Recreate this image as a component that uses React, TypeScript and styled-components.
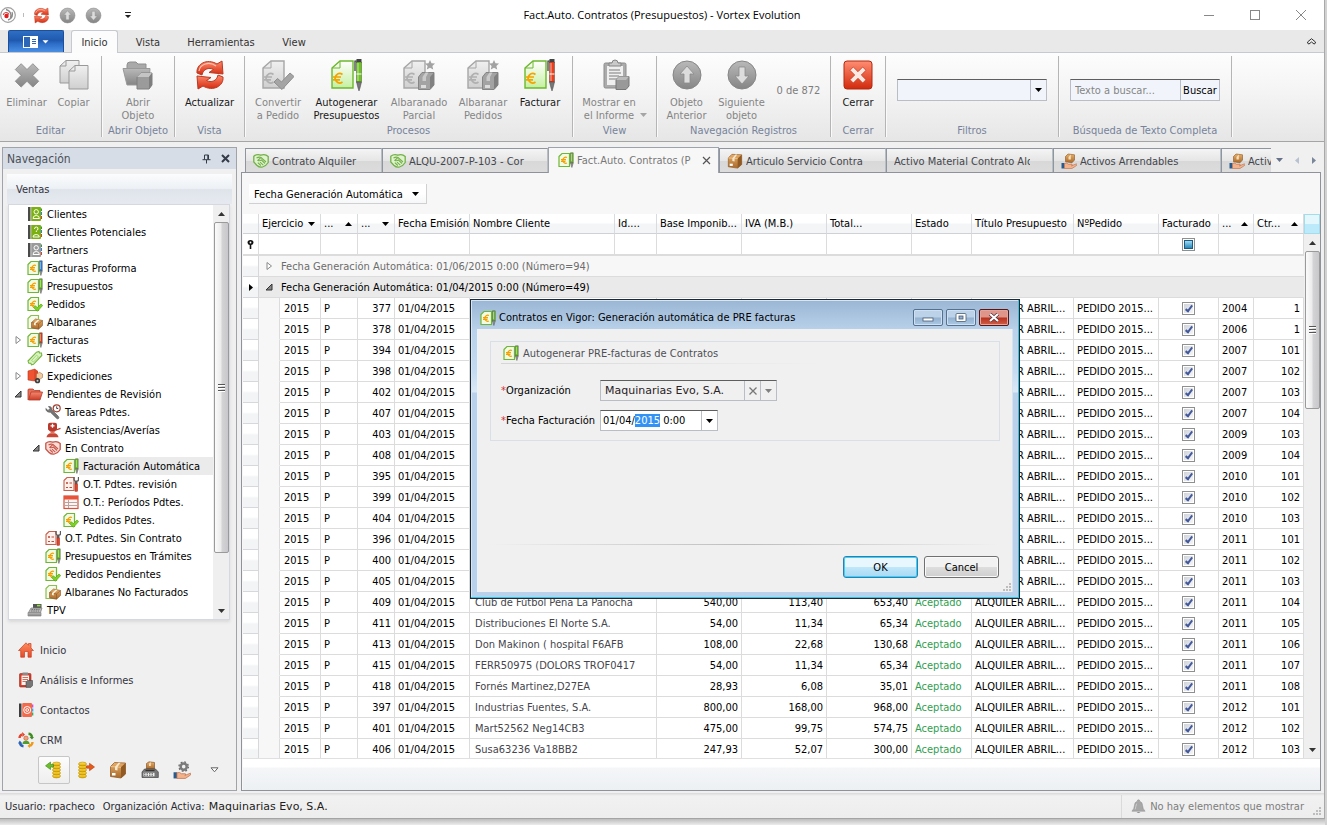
import React, { useEffect, useRef } from 'react';
import styled, { createGlobalStyle, css } from 'styled-components';

const UI = '"DejaVu Sans Condensed", "Noto Sans", sans-serif';
const WIDE = '"DejaVu Sans", "Noto Sans", sans-serif';

const GlobalStyle = createGlobalStyle`
  *, *::before, *::after { box-sizing: border-box; }
  body { margin: 0; background: #dcdcdc; font-family: ${UI}; font-size: 11px; line-height: 13px; color: #000; }
  button, input, select { font: inherit; color: inherit; margin: 0; }
  button { padding: 0; border: 0; background: none; }
  ul { list-style: none; margin: 0; padding: 0; }
  svg { display: block; flex: none; }
`;

/* ---------- icons ---------- */

type IconProps = { size?: number; box?: number; children?: React.ReactNode };
const Icon = ({ size = 16, box = 16, children }: IconProps) => (
  <svg width={size} height={size} viewBox={`0 0 ${box} ${box}`} fill="none" aria-hidden="true">{children}</svg>
);

const HiddenDefs = styled.svg`position: absolute; width: 0; height: 0;`;
const Defs = () => (
  <HiddenDefs aria-hidden="true">
    <defs>
      {([
        ['gGray', '#b9b9b9', '#858585'], ['gPaleGray', '#f0f0f0', '#cfcfcf'], ['gRed', '#ff8a6c', '#d42a10'],
        ['gRedBtn', '#ff8d72', '#d12a0c'], ['gGreenDoc', '#ffffff', '#c5f0a0'], ['gBox', '#e8b06a', '#a9682a'],
        ['gGold', '#ffe45c', '#e0a800'], ['gFolder', '#f58a72', '#c93c28'], ['gHome', '#ff8e5e', '#e5482a'],
      ] as const).map(([id, a, b]) => (
        <linearGradient key={id} id={id} x1="0" y1="0" x2="0" y2="1">
          <stop offset="0" stopColor={a} /><stop offset="1" stopColor={b} />
        </linearGradient>
      ))}
    </defs>
  </HiddenDefs>
);

const RefreshIcon = ({ size = 32 }) => (
  <Icon size={size} box={32}>
    <g fill="url(#gRed)" stroke="#b93a22" strokeWidth="1" strokeLinejoin="round">
      <path d="M3 14 C2 5 13 -1 23 5 L28 2 L29 15 L15 13.500 L19.500 10.500 C15 8 9 10 8 16 Z" />
      <path d="M29 18 C30 27 19 33 9 27 L4 30 L3 17 L17 18.500 L12.500 21.500 C17 24 23 22 24 16 Z" />
    </g>
    <path d="M5 12 C6 5 15 2 22 7" stroke="#ffc4b3" strokeWidth="1.200" />
  </Icon>
);

const RoundArrow = ({ size = 32, down = false }) => (
  <Icon size={size} box={32}>
    <circle cx="16" cy="16" r="14" fill="url(#gGray)" stroke="#868686" />
    <path transform={down ? 'rotate(180 16 16)' : undefined} d="M16 7 L23 15 H19 V24 H13 V15 H9 Z" fill="#dcdcdc" stroke="#8b8b8b" strokeWidth=".8" />
  </Icon>
);

const AppIcon = () => (
  <Icon>
    <circle cx="8" cy="8" r="7.300" fill="#fff" stroke="#a0a0a0" strokeWidth="1.200" />
    <path d="M6 2.500 C10 3.500 12 7 10.500 11 M12 5 C13.500 8 12 12 8 13" stroke="#8a8a8a" strokeWidth="1.300" />
    <path d="M3.300 8 C3.800 5 7.500 4.500 9 7.500" stroke="#e03a3a" strokeWidth="1.200" />
    <circle cx="6.500" cy="9" r="2.200" fill="#e01f1f" />
  </Icon>
);

const CrossIcon = () => (
  <Icon size={32} box={32}>
    <path d="M9.500 3 L16 9.500 L22.500 3 L29 9.500 L22.500 16 L29 22.500 L22.500 29 L16 22.500 L9.500 29 L3 22.500 L9.500 16 L3 9.500 Z" transform="translate(1.600 2) scale(.9)" fill="url(#gGray)" stroke="#8b8b8b" />
  </Icon>
);

const CopyIcon = () => (
  <Icon size={32} box={32}>
    <path d="M2 7 L8 1.500 H21 V24 H2 Z" fill="url(#gPaleGray)" stroke="#999" />
    <path d="M2 7 H8 V1.500" stroke="#999" />
    <path d="M11 12 L17 6.500 H30 V30 H11 Z" fill="url(#gPaleGray)" stroke="#999" />
    <path d="M11 12 H17 V6.500" stroke="#999" />
  </Icon>
);

const FolderBoxIcon = () => (
  <Icon size={32} box={32}>
    <path d="M5 20 L5 6 Q5 3 8 3 H14 L16 5 H24 V14 Z" fill="#a9a9a9" stroke="#8f8f8f" />
    <path d="M1 9.500 H28 L27 26 H5 Z" fill="url(#gGray)" stroke="#999" />
    <path d="M15 18 L19 14 H30 V26 L27 30 H15 Z" fill="#9b9b9b" stroke="#7f7f7f" />
    <path d="M15 18 L19 14 H30 L27 18 Z" fill="#c4c4c4" />
    <path d="M27 18 L30 14 V26 L27 30 Z" fill="#7e7e7e" />
  </Icon>
);

const BigPage = ({ gray = false }) => (
  <g>
    <path d="M1 9 L9 2 H22 V29 H1 Z" fill={gray ? 'url(#gPaleGray)' : 'url(#gGreenDoc)'} stroke={gray ? '#a6a6a6' : '#6cb82c'} strokeWidth="1.400" />
    <path d="M1 9 H9 V2" stroke={gray ? '#a6a6a6' : '#6cb82c'} />
    <path d="M11.500 15.500 A4.600 4.600 0 1 0 11.500 23 M2 18 H10 M2 20.800 H9" stroke={gray ? '#b0b0b0' : '#f5a300'} strokeWidth="1.700" />
  </g>
);

const BigDocCheck = () => (
  <Icon size={32} box={32}><BigPage gray />
    <path d="M12 23 L15.500 19.500 L19.500 23 L28 14 L32 17.500 L20 30.500 Z" fill="#a5a5a5" stroke="#8e8e8e" /></Icon>
);
const BigDocBox = () => (
  <Icon size={32} box={32}><BigPage gray />
    <path d="M15.500 18 L19 13.500 H31 V26 L27 30.500 H15.500 Z" fill="#a3a3a3" stroke="#858585" />
    <path d="M27 18 L31 13.500 V26 L27 30.500 Z" fill="#808080" />
    <path d="M19.500 18 L22.500 13.500 H25.500 L23 18 V22 H19.500 Z" fill="#cacaca" />
    <rect x="18" y="26" width="5" height="3" fill="#dcdcdc" />
    <path d="M27 1 L28.500 4.200 L32 4.600 L29.400 7 L30.200 10.500 L27 8.700 L23.800 10.500 L24.600 7 L22 4.600 L25.500 4.200 Z" fill="#a2a2a2" /></Icon>
);
const BigDocPen = ({ color }: { color: string }) => (
  <Icon size={32} box={32}><BigPage />
    <path d="M24 12 V2 H27" stroke="#333" strokeWidth="1.200" />
    <rect x="25.500" y="0" width="5" height="4" fill="#444" />
    <rect x="25.500" y="3" width="5" height="20" fill={color} stroke="#333" strokeWidth=".4" />
    <rect x="26.500" y="4" width="1" height="18" fill="#fff" opacity=".6" />
    <path d="M25.500 15 H30.500" stroke="#fff" /><path d="M25.500 23 H30.500 L29 29 L28 32 L27 29 Z" fill="#777" stroke="#444" strokeWidth=".5" /></Icon>
);

const ClipboardIcon = () => (
  <Icon size={32} box={32}>
    <rect x="5" y="4" width="22" height="25" rx="1.500" fill="#ababab" stroke="#8c8c8c" />
    <rect x="8" y="7" width="16" height="19" fill="#efefef" />
    <path d="M10 7 V4 H13 A3 3 0 0 1 19 4 H22 V7 Z" fill="#c9c9c9" stroke="#858585" />
    <path d="M10 11 H21 M10 14 H22 M10 17 H20 M10 20 H18" stroke="#a2a2a2" strokeWidth="1.400" />
    <path d="M17 21 L20 17.500 H30 V27 L27 30.500 H17 Z" fill="#999" stroke="#777" />
    <path d="M17 21 L20 17.500 H30 L27 21 Z" fill="#bbb" />
  </Icon>
);

const CloseBigIcon = () => (
  <Icon size={32} box={32}>
    <rect x="2" y="2" width="28" height="28" rx="3" fill="url(#gRedBtn)" stroke="#b3290f" />
    <path d="M11.300 8 L16 12.700 L20.700 8 L24 11.300 L19.300 16 L24 20.700 L20.700 24 L16 19.300 L11.300 24 L8 20.700 L12.700 16 L8 11.300 Z" fill="#ffe9e2" stroke="#c43a20" strokeWidth=".8" />
  </Icon>
);

const BookIcon = ({ color, mark = false }: { color: string; mark?: boolean }) => (
  <Icon>
    <path d="M1 1 H3.500 V15 H1 Z" fill="#4a4a4a" />
    <path d="M4.200 1 H13 Q14 1 14 2 V14 Q14 15 13 15 H4.200 Z" fill={color} />
    <path d="M14.500 2.500 V5" stroke="#2a9d3c" /><path d="M14.500 6 V9" stroke="#2e7fe0" /><path d="M14.500 10 V13" stroke="#e04020" />
    {mark
      ? <path d="M7.500 5 Q7.500 3 9.300 3 Q11.200 3 11 5 Q10.800 6 9.300 7 V8 M6 13 Q6 10.500 9.200 10.500 Q12.300 10.500 12.300 13 Z" stroke="#fff" />
      : <><circle cx="9.200" cy="5.800" r="2.200" stroke="#fff" /><path d="M6 12.500 Q6 9.500 9.200 9.500 Q12.400 9.500 12.400 12.500 Z" stroke="#fff" /></>}
  </Icon>
);

const SmallPage = () => (
  <g>
    <path d="M1 4.500 L4 1.500 H11.500 V14.500 H1 Z" fill="#f0fbe4" stroke="#6fb536" strokeWidth="1.200" />
    <path d="M9 5.500 A3 3 0 1 0 9 11 M3 7.600 H8 M3 9.300 H7.500" stroke="#f5a000" strokeWidth="1.200" />
  </g>
);
const DocPenIcon = ({ color = '#6cc51a' }) => (
  <Icon><SmallPage />
    <path d="M12.500 .8 H15.200 V11 H12.500 Z" fill={color} stroke="#444" strokeWidth=".5" />
    <path d="M13.400 2 V9" stroke="#fff" strokeWidth=".6" opacity=".7" />
    <path d="M12.500 11 H15.200 L13.900 15.500 Z" fill="#999" stroke="#555" strokeWidth=".5" /></Icon>
);
const DocCheckIcon = () => (
  <Icon><SmallPage /><path d="M6.500 11.500 L8.500 9.800 L10.300 11.600 L14 8 L15.700 9.500 L10.400 15.300 Z" fill="#7ed321" stroke="#4d9c12" strokeWidth=".6" /></Icon>
);
const DocBoxIcon = () => (
  <Icon>
    <path d="M1 4.500 L4 1.500 H11.500 V14.500 H1 Z" fill="#f4fbea" stroke="#8cbf4d" strokeWidth="1.200" />
    <path d="M4.500 8.500 L8.500 5 L15.500 6.500 V11.500 L11.500 15.300 L4.500 13.800 Z" fill="url(#gBox)" stroke="#8a5420" strokeWidth=".6" />
    <path d="M11.500 10 L15.500 6.500 M4.500 8.500 L11.500 10 V15" stroke="#8d5523" strokeWidth=".6" /><path d="M7 9 L11 5.600 L12.500 6 L8.700 9.400 V11.500 L7 11 Z" fill="#fff2dc" />
  </Icon>
);
const TicketIcon = () => (
  <Icon><path d="M1 11 L9.500 2.200 L12 1.500 L12.500 3 L14.500 3 L14.800 5.500 L6.500 14.300 L4.500 14.800 L3.800 13.200 L1.800 13.200 Z" fill="#d9f3c0" stroke="#74b43c" strokeWidth="1.100" /><path d="M4.500 10.500 L9.500 5.200 L11.500 6.800 L6.500 12 Z" stroke="#a5d67c" /></Icon>
);
const ExpeditionIcon = () => (
  <Icon><path d="M1 3 L8 1 V13 L1 12 Z" fill="#ef5330" stroke="#b83218" strokeWidth=".6" /><path d="M8 1 L11 3 V12 L8 13 Z" fill="#d6492c" />
    <path d="M9.500 6 L12.500 4.300 L15.500 6 V9.500 L12.500 11.500 L9.500 9.700 Z" fill="#f0cba2" stroke="#a8703a" strokeWidth=".6" />
    <circle cx="10.500" cy="12.700" r="2.600" fill="#3d3d3d" /><circle cx="10.500" cy="12.700" r="1" fill="#ccc" /></Icon>
);
const FolderIcon = () => (
  <Icon><path d="M1 14 V4 Q1 3 2 3 H6 L7.500 4.500 H13 V7" fill="#e5705a" stroke="#b83a26" strokeWidth=".8" /><path d="M1.500 14 L4 6 H15.500 L13 14 Z" fill="url(#gFolder)" stroke="#b83a26" strokeWidth=".8" /></Icon>
);
const TaskIcon = () => (
  <Icon><path d="M0.800 4.500 L3 6.500 L5 4.500 L3.500 2.500 Q7 2.200 7 6 L13 12 Q14.500 13.500 13.500 14.500 Q12.500 15.300 11.500 14.200 L5.500 8.300 Q1 8.500 .8 4.500 Z" fill="#777" stroke="#4d4d4d" strokeWidth=".6" />
    <circle cx="11.700" cy="4.300" r="3.500" fill="#fff" stroke="#a54030" strokeWidth="1.200" /><path d="M11.700 2.300 V4.500 H13.200" stroke="#333" strokeWidth=".9" /></Icon>
);
const AssistIcon = () => (
  <Icon><path d="M3 2.500 Q3 .8 5 .8 H10 Q12 .8 12 2.500 V7.500 Q10 10 7.500 10 Q5 10 3 7.500 Z" fill="#b8392b" /><path d="M7.500 1.800 V5.800 M5.500 3.800 H9.500" stroke="#fff" strokeWidth="1.300" />
    <path d="M11 8 L15.500 6.300" stroke="#c03a2a" strokeWidth="1.300" /><path d="M1.500 15.300 Q2 11.500 6 11.200 H9 Q13 11.500 13.500 15.300 Z" fill="#c84636" /><path d="M5.500 9.500 H9.500 V11.500 H5.500 Z" fill="#e1735f" /></Icon>
);
const HandshakeIcon = ({ color, pale }: { color: string; pale: string }) => (
  <Icon><path d="M.8 3.200 Q4 .8 7.800 2.200 Q12 .5 15.200 3.400 V9.500 Q13 13 9.500 14 Q6.500 14.800 3.800 12.200 L.8 9 Z" fill={pale} stroke={color} strokeWidth="1.300" />
    <path d="M3.500 5 Q6 3.500 8 4.500 L13 9 M7.500 5 L4.800 7.300 Q6.500 8.300 8.500 7 L12 10.500 M7 9.200 L10.300 12.200 M4.800 9.600 L7.800 12.500" stroke={color} strokeWidth="1.100" /></Icon>
);
const WorkOrderIcon = () => (
  <Icon><path d="M1 4.500 L4 1.500 H11 V14.500 H1 Z" fill="#fdf1ee" stroke="#c9604c" strokeWidth="1.100" />
    <path d="M3 7 H5 M4 6 V8 M6.500 7 H9 M3 11.500 H5 M6.500 11.500 H9" stroke="#c04a35" strokeWidth="1.100" />
    <path d="M11 1 V3.500 Q11 5 12.500 5.200 V8 M15.500 1 V3.500 Q15.500 5 13.800 5.200 V8" stroke="#5a5a5a" strokeWidth="1.300" /><rect x="12" y="8" width="2.600" height="7.300" fill="#e2452c" stroke="#a32a16" strokeWidth=".5" /></Icon>
);
const TableIcon = () => (
  <Icon><rect x="1" y="2" width="14" height="12.500" fill="#fdf4f1" stroke="#d6543c" strokeWidth="1.200" /><rect x="1" y="2" width="14" height="3.500" fill="#e8533a" /><path d="M5.500 6 V14 M1 8.500 H15 M1 11.500 H15" stroke="#b9a5a0" /></Icon>
);
const PosIcon = () => (
  <Icon><path d="M6 2 H14.500 V6 H6 Z" fill="#555" /><rect x="10" y="2.800" width="3.500" height="1.600" fill="#8ee03a" /><path d="M4 6 H15 L13.500 10.500 H1.500 Z" fill="#b9b9b9" stroke="#7b7b7b" strokeWidth=".7" /><path d="M4.500 7.500 H12.500 M4 9 H12" stroke="#777" strokeDasharray="1.500 .8" /><path d="M1 10.500 H14 V14 H1 Z" fill="url(#gGray)" stroke="#888" strokeWidth=".7" /></Icon>
);
const HomeIcon = () => (
  <Icon><path d="M.5 8.500 L8 .8 L10.500 3.300 V1.500 H13 V6 L15.500 8.500 H13.300 V15.200 H10 V9.500 H6.500 V15.200 H2.700 V8.500 Z" fill="url(#gHome)" stroke="#c93f20" strokeWidth=".7" /></Icon>
);
const ReportIcon = () => (
  <Icon><rect x="1.500" y="1.500" width="11.500" height="13.500" rx="1" fill="#d2402c" stroke="#9c2a1a" strokeWidth=".6" /><rect x="3.500" y="3.500" width="7.500" height="9.500" fill="#fff4f0" /><rect x="4.500" y=".5" width="5.500" height="2.500" fill="#8a8a8a" /><path d="M4.500 5.500 H10 M4.500 7.500 H10 M4.500 9.500 H8" stroke="#d0705f" /><path d="M8 10 L9.500 8.500 H14.500 V13.500 L13 15.300 H8 Z" fill="#777" stroke="#444" strokeWidth=".6" /></Icon>
);
const ContactsIcon = () => (
  <Icon><path d="M1 1.500 H3.500 V15 H1 Z" fill="#3d3d3d" /><rect x="4.200" y="1" width="9.800" height="14" rx="1" fill="#f26a4c" /><circle cx="9.200" cy="8" r="3.500" stroke="#fff" /><circle cx="9.200" cy="8" r="1.400" stroke="#fff" /><path d="M14.700 2.500 V5.500" stroke="#d03ad0" strokeWidth="1.200" /><path d="M14.700 6.500 V9.500" stroke="#2e9de0" strokeWidth="1.200" /><path d="M14.700 10.500 V13.500" stroke="#2ea04a" strokeWidth="1.200" /></Icon>
);
const CrmIcon = () => (
  <Icon><g strokeWidth="2.400"><path d="M1.500 6 Q1.800 3 4 2.300" stroke="#e2452c" /><path d="M10.500 1.800 Q13.500 2 14 5" stroke="#3f8c22" /><path d="M14.500 10 Q14.300 13 12 13.800" stroke="#f09a18" /><path d="M5.500 14.200 Q2.500 14 2 11" stroke="#2a62b8" /></g>
    <path d="M4 0 L7 2.500 L4.500 5 Z" fill="#e2452c" /><path d="M11.500 5 H16 L14 7.500 Z" fill="#3f8c22" /><path d="M12 11.500 V16 L9.500 14 Z" fill="#f09a18" /><path d="M0 11.500 L1.800 8.500 L4.300 11.500 Z" fill="#2a62b8" />
    <circle cx="8" cy="6.200" r="2.200" fill="#f0a07a" stroke="#b34a30" strokeWidth=".5" /><path d="M4.500 12 Q4.500 8.800 8 8.800 Q11.500 8.800 11.500 12 Z" fill="#4f9e30" /></Icon>
);
const CoinsIcon = ({ out = false }) => (
  <Icon size={18} box={18}>
    <g transform={out ? 'translate(1 0)' : 'translate(7 0)'}>
      {[15, 12, 9, 6, 3].map((y) => <ellipse key={y} cx="4.500" cy={y} rx="4" ry="1.900" fill="url(#gGold)" stroke="#b98a00" strokeWidth=".6" />)}
    </g>
    {out
      ? <path d="M9.500 4.800 H12.500 V2.300 L17.500 6 L12.500 9.700 V7.200 H9.500 Z" fill="#e85a1a" stroke="#b53c0c" strokeWidth=".6" />
      : <path d="M8.500 3.500 H5.500 V1 L.5 4.800 L5.500 8.500 V6 H8.500 Z" fill="#6cbf2a" stroke="#3c8412" strokeWidth=".6" />}
  </Icon>
);
const BoxIcon = ({ size = 18 }) => (
  <Icon size={size} box={18}><path d="M1.500 5.500 L5.500 1.500 L16.500 2 V13 L12 17 L1.500 15.500 Z" fill="url(#gBox)" stroke="#8b5520" strokeWidth=".7" /><path d="M12 6.300 L16.500 2 V13 L12 17 Z" fill="#915a25" /><path d="M1.500 5.500 L12 6.300" stroke="#f0c389" /><path d="M6 5.800 L9.500 1.700 L11.500 1.800 L8.500 6 V9.500 L6 9 Z" fill="#f6e7cf" /><rect x="3" y="12" width="3.500" height="2.500" fill="#fff" /></Icon>
);
const PrinterIcon = () => (
  <Icon size={18} box={18}><path d="M5.500 2.500 L8 .8 L13.500 1.500 V8 H5.500 Z" fill="url(#gBox)" stroke="#7b4515" strokeWidth=".6" /><path d="M8 2.800 L9.800 1 V5 H8 Z" fill="#f6e0bd" /><path d="M3.500 8 H14.500 L17.300 11 V16.500 H1 V11 Z" fill="#777" stroke="#444" strokeWidth=".7" /><path d="M4.500 9.500 H13.500" stroke="#333" strokeWidth="1.200" /><rect x="2.500" y="11.800" width="11" height="3.500" fill="#eee" /><path d="M3 12.700 H13 M3 14.300 H13" stroke="#666" strokeDasharray="1.500 1" /></Icon>
);
const HandPalm = () => (
  <g><path d="M.5 10 H3.500 V15.500 H.5 Z" fill="#2a5a8c" /><path d="M3.500 10.500 Q6 9.500 7.500 11.300 H11 Q11.800 12.500 10.500 12.800 L15.500 10.800 Q16.500 11.500 15.500 12.500 L11 15.500 H3.500 Z" fill="#f3b18c" stroke="#b96a44" strokeWidth=".6" /></g>
);
const HandBoxIcon = () => (
  <Icon><path d="M4.500 3.500 L7 1 L13.500 1.800 V7 L11 9.800 L4.500 8.800 Z" fill="url(#gBox)" stroke="#8b5520" strokeWidth=".6" /><path d="M7.500 4 L9.800 1.500 V6.500 H7.500 Z" fill="#f6e0bd" /><HandPalm /></Icon>
);
const HandGearIcon = () => (
  <Icon size={18}><circle cx="9.500" cy="5" r="2.700" stroke="#7b7b7b" strokeWidth="2.200" /><circle cx="9.500" cy="5" r="4.200" stroke="#6b6b6b" strokeWidth="1.200" strokeDasharray="1.600 1.700" /><HandPalm /></Icon>
);
const BellIcon = () => (
  <Icon size={15}><path d="M8 .8 Q9.300 .8 9.200 2.300 Q12.300 3.300 12.300 7 Q12.500 10.500 15 13 H1 Q3.500 10.500 3.700 7 Q3.700 3.300 6.800 2.300 Q6.700 .8 8 .8 Z" fill="#a8a8a8" stroke="#8f8f8f" strokeWidth=".6" /><path d="M6 13.800 Q8 16 10 13.800 Z" fill="#8d8d8d" /><path d="M6 5 Q5 8 4.500 11" stroke="#d0d0d0" /></Icon>
);

const Caret = ({ up = false, color = '#000' }) => (
  <svg width="7" height="4" viewBox="0 0 7 4" aria-hidden="true"><path d={up ? 'M0 4 H7 L3.500 0 Z' : 'M0 0 H7 L3.500 4 Z'} fill={color} /></svg>
);
const SideCaret = ({ left = false, color = '#000' }) => (
  <svg width="4" height="7" viewBox="0 0 4 7" aria-hidden="true"><path d={left ? 'M4 0 V7 L0 3.500 Z' : 'M0 0 V7 L4 3.500 Z'} fill={color} /></svg>
);
const Twisty = ({ open }: { open: boolean }) => (
  <svg width="8" height="8" viewBox="0 0 8 8" aria-hidden="true">
    {open ? <path d="M7 1 V7 H1 Z" fill="#888" stroke="#333" /> : <path d="M2 .5 L6.500 4 L2 7.500 Z" fill="#fff" stroke="#888" />}
  </svg>
);
const Grip = () => (
  <svg width="8" height="8" viewBox="0 0 8 8" aria-hidden="true"><path d="M6 0h2v2H6zM3 3h2v2H3zM6 3h2v2H6zM0 6h2v2H0zM3 6h2v2H3zM6 6h2v2H6z" fill="#bdbdbd" /></svg>
);

/* ---------- window frame ---------- */

const Frame = styled.div`
  display: flex; flex-direction: column; height: 100vh; padding: 0 2px 6px 0;
  background: linear-gradient(#d2d2d2, #d2d2d2) right / 2px 100% no-repeat, linear-gradient(#bdbdbd, #ececec) bottom / 100% 6px no-repeat;
`;
const Shell = styled.div`
  flex: 1; min-height: 0; display: flex; flex-direction: column;
  border-right: 1px solid #a9a9a9; border-bottom: 1px solid #a4a4a4; background: #f0f0f0;
`;

const TitleBar = styled.header`display: flex; align-items: center; height: 30px; background: #fff;`;
const Quick = styled.div`display: flex; flex: 1; align-items: center; gap: 9px;`;
const QuickButton = styled.button`display: grid; place-items: center; width: 17px; height: 20px;`;
const QuickRule = styled.span`width: 1px; height: 4px; background: #bbb; margin-left: -2px;`;
const QuickMenu = styled(QuickButton)`margin-left: 8px;`;
const WindowTitle = styled.h1`margin: 0; font: 400 11px/16px "Open Sans", "Noto Sans", sans-serif;`;
const WinControls = styled.div`display: flex; flex: 1; justify-content: flex-end;`;
const WinButton = styled.button`display: grid; place-items: center; width: 46px; height: 30px;`;

const TabStrip = styled.nav`
  display: flex; align-items: stretch; height: 23px; padding-left: 8px; background: #e9e9e9; border-bottom: 1px solid #c6c9cd;
`;
const FileButton = styled.button`
  display: flex; align-items: center; justify-content: center; gap: 4px; width: 56px; margin-right: 7px;
  border: 1px solid #1c4f9c; border-bottom: 0; border-radius: 2px 2px 0 0;
  background: linear-gradient(#2e6fc4, #2059ae 45%, #2c6dc8 60%, #4a8fe4);
`;
const RibbonTab = styled.button<{ $active?: boolean; $w: number }>`
  width: ${(p) => p.$w}px; color: #333; padding-top: 2px;
  ${(p) => p.$active && css`
    margin-bottom: -1px; padding-top: 0; background: #fcfcfc; border: 1px solid #c6c9cd; border-bottom: 0; border-radius: 3px 3px 0 0;
  `}
`;
const CollapseButton = styled.button`margin-left: auto; width: 26px; display: grid; place-items: center;`;

const Ribbon = styled.div`
  display: flex; height: 89px; padding: 3px 0 4px;
  background: linear-gradient(#fdfdfd, #f4f4f4 45%, #e6e6e6); border-bottom: 1px solid #a5a5a5;
`;
const RibbonGroup = styled.section<{ $w: number }>`
  display: flex; flex-direction: column; width: ${(p) => p.$w}px; border-right: 1px solid #b5b5b5; box-shadow: 1px 0 0 #fafafa;
`;
const RibbonItems = styled.div<{ $start?: boolean }>`
  flex: 1; display: flex; justify-content: ${(p) => (p.$start ? 'flex-start' : 'center')}; padding: 0 3px;
`;
const RibbonCaption = styled.h2`margin: 0; font: inherit; line-height: 12px; text-align: center; color: #76839b; white-space: nowrap;`;
const RibbonButton = styled.button<{ $w: number; $live?: boolean }>`
  display: flex; flex-direction: column; align-items: center; width: ${(p) => p.$w}px; padding-top: 3px;
  color: ${(p) => (p.$live ? '#1a1a1a' : '#858585')}; white-space: pre; text-align: center;
`;
const RibbonLabel = styled.span`
  margin-top: 5px; display: flex; align-items: flex-end; gap: 4px;
  svg { margin-bottom: 5px; }
`;
const RecordCount = styled.span`width: 56px; padding-top: 28px; text-align: center; color: #7d7d7d; white-space: nowrap;`;
const Field = styled.div<{ $w: number; $tone?: 'blue' | 'white' | 'flat' }>`
  display: flex; align-items: stretch; width: ${(p) => p.$w}px; height: 21px;
  border: 1px solid #b9bec6; border-top-color: #5e5e5e;
  background: ${(p) => (p.$tone === 'white' ? '#fff' : p.$tone === 'flat' ? '#f0f0f0' : '#f1f5fb')};
`;
const RibbonField = styled(Field)`margin-top: 23px; height: 22px;`;
const Select = styled.select`flex: 1; min-width: 0; appearance: none; border: 0; background: none; outline: 0;`;
const TextBox = styled.input<{ $wide?: boolean }>`
  flex: 1; min-width: 0; border: 0; background: none; outline: 0; padding: 0 0 0 ${(p) => (p.$wide ? 4 : 2)}px;
  font-family: ${(p) => (p.$wide ? WIDE : UI)}; color: ${(p) => (p.$wide ? '#2a2225' : '#000')};
  &::placeholder { color: #858585; opacity: 1; }
  &::selection { background: #3393f5; color: #fff; }
`;
const SearchBox = styled(TextBox)`padding-left: 4px;`;
const FieldButton = styled.button<{ $w?: number }>`
  display: grid; place-items: center; width: ${(p) => p.$w ?? 16}px; border-left: 1px solid #b9bec6;
`;

/* ---------- navigation panel ---------- */

const Body = styled.div`flex: 1; min-height: 0; display: flex; gap: 4px; padding: 5px 2px 2px;`;
const Side = styled.aside`
  display: flex; flex-direction: column; flex: none; width: 235px; border: 1px solid #a0a3a8; background: #f0f0f0; color: #33333d;
`;
const SideHead = styled.div`display: flex; align-items: center; gap: 10px; height: 21px; padding: 0 6px 0 4px; background: #d6dde6;`;
const SideTitle = styled.h2`margin: 0; flex: 1; font-size: 12px; font-weight: 400; line-height: 16px; color: #4c5058;`;
const SideSection = styled.h3`
  margin: 5px 4px 0; height: 30px; padding-left: 9px; font: inherit; line-height: 32px;
  background: linear-gradient(#fbfcfd, #edf1f5 48%, #dfe4eb 52%, #e6eaf0);
`;
const TreeBox = styled.div`
  flex: 1 1 auto; min-height: 0; display: flex; margin: 0 6px 0 5px; overflow: hidden; background: #fff;
  border: 1px solid #d5d9df; color: #000; box-shadow: 0 2px 3px #d9d9d9;
`;
const Tree = styled.ul`flex: 1; min-width: 0;`;
const TreeRow = styled.li<{ $level: number }>`display: flex; align-items: center; height: 18px; padding-left: ${(p) => p.$level * 18}px;`;
const TwistyCell = styled.span`width: 18px; display: grid; place-items: center; flex: none;`;
const TreeLink = styled.a<{ $on?: boolean }>`
  flex: 1; height: 18px; line-height: 19px; padding-left: 4px; color: #000; text-decoration: none; white-space: nowrap; overflow: hidden;
  background: ${(p) => (p.$on ? '#ebebeb' : 'none')};
`;
const ScrollTrack = styled.div`
  flex: none; display: flex; flex-direction: column; align-items: center; width: 16px; background: #efefef;
`;
const ScrollArrow = styled.span`display: grid; place-items: center; height: 17px; width: 100%; flex: none;`;
const ScrollThumb = styled.span<{ $h: number }>`
  display: grid; place-items: center; width: 15px; height: ${(p) => p.$h}%; border: 1px solid #9a9a9a; border-radius: 2px;
  background: linear-gradient(90deg, #fbfbfb, #ececec 45%, #d3d3d6 55%, #c8c8cc);
`;
const ScrollSpace = styled.span`flex: 1;`;
const Ridges = styled.span`width: 7px; height: 8px; background: repeating-linear-gradient(#555 0 1px, #fff 1px 2px, transparent 2px 3px);`;
const SideLinks = styled.ul`margin-top: 15px; flex: none;`;
const SideLink = styled.a`
  display: flex; align-items: center; gap: 6px; height: 30px; padding-left: 15px; color: #33333d; text-decoration: none;
`;
const SideTools = styled.div`display: flex; padding: 1px 0 6px 35px; flex: none;`;
const SideTool = styled.button<{ $on?: boolean }>`
  display: grid; place-items: center; width: 32px; height: 28px;
  ${(p) => p.$on && css`border: 1px solid #c6c6c6; border-radius: 2px; background: linear-gradient(#fcfcfc, #eeeeee);`}
`;

/* ---------- documents ---------- */

const Main = styled.main`flex: 1; min-width: 0; display: flex; flex-direction: column;`;
const DocTabs = styled.div`
  position: relative; z-index: 1; display: flex; align-items: flex-end; height: 26px; margin-bottom: -1px; padding-left: 4px;
`;
const DocTabList = styled.div`flex: 1; min-width: 0; display: flex; align-items: flex-end; overflow: hidden;`;
const DocTab = styled.div<{ $w: number; $active?: boolean }>`
  flex: none; display: flex; align-items: center; gap: 3px; width: ${(p) => p.$w}px; height: 24px; margin-bottom: 1px; padding: 1px 0 0 7px;
  border: 1px solid #8f959e; border-bottom: 0; border-right-color: #b9bdc4; color: #44464d;
  background: linear-gradient(#f4f4f4, #e6e6e6 50%, #d8d8d8 52%, #dcdcdc);
  ${(p) => p.$active && css`height: 26px; margin-bottom: 0; padding: 0 0 1px 9px; border-color: #9da3ac; background: #f7f7f7; color: #777;`}
`;
const DocTabLabel = styled.button`
  flex: 1; min-width: 0; height: 20px; overflow: hidden; white-space: nowrap; text-align: left;
`;
const DocTabClose = styled.button`flex: none; width: 24px; height: 20px; display: grid; place-items: center;`;
const DocTabGutter = styled.span`flex: none; width: 19px;`;
const DocTabNav = styled.div`display: flex; align-items: center; height: 24px; width: 51px; margin-bottom: 1px; flex: none;`;
const DocTabNavButton = styled.button`display: grid; place-items: center; width: 17px; height: 20px;`;

const Panel = styled.section`
  flex: 1; min-height: 0; display: flex; flex-direction: column; margin-right: 1px;
  border: 1px solid #8f929b; padding-left: 1px; background: #f7f7f7;
`;
const GroupBar = styled.div`padding: 11px 0 10px 6px; flex: none;`;
const GroupChip = styled.button`
  display: flex; align-items: center; gap: 9px; height: 20px; min-width: 178px; padding: 1px 7px 0 5px; background: linear-gradient(#fff 50%, #f6f7f9);
  border-right: 1px solid #d0d0d0; border-bottom: 1px solid #d0d0d0; white-space: nowrap;
`;
const GridArea = styled.div`flex: 1; min-height: 0; display: flex; overflow: hidden; border-bottom: 1px solid #e0e0e0;`;
const TableWrap = styled.div`flex: 1; min-width: 0; overflow: hidden;`;
const Table = styled.table`width: 100%; table-layout: fixed; border-collapse: separate; border-spacing: 0;`;
const Col = styled.col<{ $w?: number }>`${(p) => p.$w && css`width: ${p.$w}px;`}`;
const HeadCell = styled.th`
  height: 20px; padding: 0 0 0 3px; font-weight: 400; text-align: left; white-space: nowrap; overflow: hidden;
  background: linear-gradient(#fff 45%, #f3f5f7 55%); border-right: 1px solid #d9dbde; border-bottom: 1px solid #cfd1d4;
`;
const HeadInner = styled.div`display: flex; align-items: center; justify-content: space-between; padding-right: 5px;`;
const Cell = styled.td<{ $align?: string; $tone?: string }>`
  height: 21px; padding: 0 3px; border-right: 1px solid #dcdcdc; border-bottom: 1px solid #dcdcdc; background: #fff;
  white-space: nowrap; overflow: hidden; text-align: ${(p) => p.$align ?? 'left'}; color: ${(p) => p.$tone ?? '#000'};
`;
const FirstCell = styled(Cell)`padding-left: 4px;`;
const NameCell = styled(Cell)`padding-left: 5px; color: #45454c;`;
const FilterCell = styled(Cell)`height: 22px; border-bottom: 2px solid #dcdcdc; padding: 0;`;
const Marker = styled(Cell)`
  padding: 0; background: linear-gradient(#fff 45%, #f3f4f6 55%); border-color: #d6d8db;
`;
const IndentCell = styled(Cell)`background: #f7f7f7; border-bottom-color: #f7f7f7; padding: 0;`;
const GroupCell = styled(Cell)<{ $on?: boolean }>`
  background: ${(p) => (p.$on ? '#eaeaea' : '#f7f7f7')}; color: ${(p) => (p.$on ? '#000' : '#6c6c6c')}; border-right: 0; padding: 0;
`;
const GroupLabel = styled.div`display: flex; align-items: center; gap: 8px; padding-left: 6px;`;
const Center = styled.span`display: grid; place-items: center;`;
const Check = styled.input<{ $mixed?: boolean }>`
  appearance: none; display: block; width: 13px; height: 13px; margin: 0 auto; border: 1px solid #8e8f8f; position: relative;
  background: linear-gradient(135deg, #cfd3da, #f6f6f6) content-box, #fff; padding: 1px;
  &::after {
    content: ''; position: absolute;
    ${(p) => p.$mixed
      ? css`inset: 1px; background: linear-gradient(#9fdcf5, #2a86b8); border: 1px solid #1c5a80;`
      : css`left: 4px; top: 1px; width: 4px; height: 8px; border: solid #44599c; border-width: 0 2px 2px 0; transform: rotate(38deg);`}
  }
`;
const CornerCell = styled.span`
  width: 100%; height: 20px; flex: none; border: 1px solid #a5dcec; background: linear-gradient(#e4f7fd 48%, #bdeafa 52%);
`;
const GridFooter = styled.div`flex: none; height: 31px; background: linear-gradient(#fff 8px, #f4f6f8 9px, #edf0f3);`;

/* ---------- dialog ---------- */

const Dialog = styled.div`
  position: absolute; z-index: 2; left: 470px; top: 299px; width: 550px; height: 300px; display: flex; flex-direction: column;
  border: 1px solid #1e2a33; padding: 0 6px 6px; color: #000;
  background: linear-gradient(#9ab6d4, #b9d1ea 30px, #c3daf0 70px, #dbe9f7 92px, #b9d1ea 93px);
  box-shadow: inset -1px -1px 0 #35c4e0, inset 1px 1px 0 #d5e6f5;
`;
const DialogHead = styled.div`display: flex; align-items: center; gap: 3px; height: 29px; padding: 6px 4px 0 3px;`;
const DialogTitle = styled.h2`margin: 0; flex: 1; font: inherit;`;
const DialogCtl = styled.button<{ $danger?: boolean }>`
  display: grid; place-items: center; width: 30px; height: 17px; border: 1px solid #56708f; border-radius: 2px; box-shadow: inset 0 0 0 1px #cfe0f2;
  background: linear-gradient(#bcd2e8 48%, #93b1d0 52%, #abc8e4);
  ${(p) => p.$danger && css`border-color: #5a1515; box-shadow: inset 0 0 0 1px #e5a59a; background: linear-gradient(#e0958a 48%, #b8301c 52%, #d0604a);`}
`;
const DialogBody = styled.form`
  flex: 1; display: flex; flex-direction: column; padding: 12px 12px 0; background: #f0f0f0; border-left: 1px solid #eaf2fa; border-right: 1px solid #d5e3f0;
`;
const GroupBox = styled.fieldset`margin: 0; border: 1px solid #d9dfe6; height: 100px; padding: 2px 0 0 10px; min-width: 0;`;
const GroupTitle = styled.div`
  display: flex; align-items: center; gap: 4px; height: 20px; padding: 0 0 2px 2px; color: #4f4f55;
  background: linear-gradient(90deg, #d5d5d5, #e6e6e6 60%, #f0f0f0) left bottom / 320px 1px no-repeat;
`;
const FormRow = styled.div`display: flex; align-items: center; height: 21px; margin-top: 9px;`;
const FirstFormRow = styled(FormRow)`margin-top: 16px;`;
const FormLabel = styled.label`width: 99px; white-space: nowrap; &::before { content: '*'; color: #d03030; }`;
const DialogFooter = styled.div`
  display: flex; justify-content: flex-end; gap: 6px; margin-top: auto; padding: 12px 1px 14px 0;
  background: linear-gradient(90deg, #f0f0f0, #bdbdbd 50%, #f0f0f0) top / 100% 1px no-repeat;
`;
const DialogButton = styled.button<{ $primary?: boolean }>`
  width: 75px; height: 22px; border: 1px solid #707070; border-radius: 3px; box-shadow: inset 0 0 0 1px #fafafa;
  background: linear-gradient(#f2f2f2 48%, #dddddd 52%, #cfcfcf);
  ${(p) => p.$primary && css`border-color: #2c7fb0; box-shadow: inset 0 0 0 1px #3fd0f5; background: linear-gradient(#e8f6fd 48%, #c0e6fa 52%, #a7daf4);`}
`;
const ResizeCorner = styled.span`position: absolute; right: 8px; bottom: 7px;`;

const StatusBar = styled.footer`
  display: flex; align-items: center; height: 25px; padding: 1px 0 0 5px; white-space: nowrap; color: #2b2b33;
  background: linear-gradient(#d9d9d9, #f1f1f1 3px, #ededed); flex: none;
`;
const StatusOrg = styled.span`margin: 0 4px 0 8px;`;
const StatusName = styled.span`font-family: ${WIDE}; color: #241c20;`;
const StatusNotice = styled.div`
  display: flex; align-items: center; gap: 4px; margin-left: auto; height: 23px; padding: 0 9px; border-left: 1px solid #dadada; color: #7d7d7d;
`;
const StatusGrip = styled.span`align-self: flex-end; padding: 0 3px 3px 0;`;

/* ---------- data ---------- */

type Node = [number, string, React.ReactNode, boolean?];
const tree: Node[] = [
  [0, 'Clientes', <BookIcon color="#7ab010" />],
  [0, 'Clientes Potenciales', <BookIcon color="#7ab010" mark />],
  [0, 'Partners', <BookIcon color="#9a9a9a" />],
  [0, 'Facturas Proforma', <DocPenIcon color="#2e7fe0" />],
  [0, 'Presupuestos', <DocPenIcon />],
  [0, 'Pedidos', <DocCheckIcon />],
  [0, 'Albaranes', <DocBoxIcon />],
  [0, 'Facturas', <DocPenIcon color="#e2401c" />, false],
  [0, 'Tickets', <TicketIcon />],
  [0, 'Expediciones', <ExpeditionIcon />, false],
  [0, 'Pendientes de Revisión', <FolderIcon />, true],
  [1, 'Tareas Pdtes.', <TaskIcon />],
  [1, 'Asistencias/Averías', <AssistIcon />],
  [1, 'En Contrato', <HandshakeIcon color="#c85547" pale="#f8dcd6" />, true],
  [2, 'Facturación Automática', <DocPenIcon />],
  [2, 'O.T. Pdtes. revisión', <WorkOrderIcon />],
  [2, 'O.T.: Períodos Pdtes.', <TableIcon />],
  [2, 'Pedidos Pdtes.', <DocCheckIcon />],
  [1, 'O.T. Pdtes. Sin Contrato', <WorkOrderIcon />],
  [1, 'Presupuestos en Trámites', <DocPenIcon />],
  [1, 'Pedidos Pendientes', <DocCheckIcon />],
  [1, 'Albaranes No Facturados', <DocBoxIcon />],
  [0, 'TPV', <PosIcon />],
];

const green = <HandshakeIcon color="#74b04a" pale="#e0f3cf" />;
const docTabs: { text: string; w: number; icon?: React.ReactNode; active?: boolean }[] = [
  { text: 'Contrato Alquiler', w: 137, icon: green },
  { text: 'ALQU-2007-P-103 - Cor', w: 166, icon: green },
  { text: 'Fact.Auto. Contratos (Presupuestos)', w: 171, icon: <DocPenIcon />, active: true },
  { text: 'Articulo Servicio Contra', w: 167, icon: <BoxIcon size={16} /> },
  { text: 'Activo Material Contrato Alquiler', w: 167 },
  { text: 'Activos Arrendables', w: 168, icon: <HandBoxIcon /> },
  { text: 'Activos', w: 168, icon: <HandBoxIcon /> },
];

const columns: { w?: number; label: string; sort?: 'up' | 'down'; span?: number }[] = [
  { w: 62, label: 'Ejercicio', sort: 'down', span: 2 },
  { w: 37, label: '...', sort: 'up' }, { w: 37, label: '...', sort: 'down' },
  { w: 75, label: 'Fecha Emisión' }, { label: 'Nombre Cliente' }, { w: 42, label: 'Id....' },
  { w: 85, label: 'Base Imponib...' }, { w: 85, label: 'IVA (M.B.)' }, { w: 85, label: 'Total...' },
  { w: 60, label: 'Estado' }, { w: 102, label: 'Título Presupuesto' }, { w: 85, label: 'NºPedido' },
  { w: 60, label: 'Facturado' }, { w: 35, label: '...', sort: 'up' }, { w: 50, label: 'Ctr...', sort: 'up' },
];

type Row = [string, string, string, string, string, string, string];
const rows: Row[] = [
  ['377', '', '', '', '', '2004', '1'], ['378', '', '', '', '', '2006', '1'], ['394', '', '', '', '', '2007', '101'],
  ['398', '', '', '', '', '2007', '102'], ['402', '', '', '', '', '2007', '103'], ['407', '', '', '', '', '2007', '104'],
  ['403', '', '', '', '', '2009', '103'], ['408', '', '', '', '', '2009', '104'], ['395', '', '', '', '', '2010', '101'],
  ['399', '', '', '', '', '2010', '102'], ['404', '', '', '', '', '2010', '103'], ['396', '', '', '', '', '2011', '101'],
  ['400', '', '', '', '', '2011', '102'], ['405', '', '', '', '', '2011', '103'],
  ['409', 'Club de Fútbol Peña La Panocha', '540,00', '113,40', '653,40', '2011', '104'],
  ['411', 'Distribuciones El Norte S.A.', '54,00', '11,34', '65,34', '2011', '105'],
  ['413', 'Don Makinon ( hospital F6AFB', '108,00', '22,68', '130,68', '2011', '106'],
  ['415', 'FERR50975 (DOLORS TROF0417', '54,00', '11,34', '65,34', '2011', '107'],
  ['418', 'Fornés Martinez,D27EA', '28,93', '6,08', '35,01', '2011', '108'],
  ['397', 'Industrias Fuentes, S.A.', '800,00', '168,00', '968,00', '2012', '101'],
  ['401', 'Mart52562 Neg14CB3', '475,00', '99,75', '574,75', '2012', '102'],
  ['406', 'Susa63236 Va18BB2', '247,93', '52,07', '300,00', '2012', '103'],
];

/* ---------- parts ---------- */

type RibbonBtn = { w: number; label: string; icon: React.ReactNode; live?: boolean; menu?: boolean };
const RibbonBtns = ({ items }: { items: RibbonBtn[] }) => (
  <>
    {items.map((b) => (
      <RibbonButton key={b.label} type="button" $w={b.w} $live={b.live}>
        {b.icon}
        <RibbonLabel>{b.label}{b.menu && <Caret color="#a5a5a5" />}</RibbonLabel>
      </RibbonButton>
    ))}
  </>
);

const RibbonBar = () => (
  <Ribbon>
    <RibbonGroup $w={102}>
      <RibbonItems $start><RibbonBtns items={[{ w: 47, label: 'Eliminar', icon: <CrossIcon /> }, { w: 47, label: 'Copiar', icon: <CopyIcon /> }]} /></RibbonItems>
      <RibbonCaption>Editar</RibbonCaption>
    </RibbonGroup>
    <RibbonGroup $w={73}>
      <RibbonItems><RibbonBtns items={[{ w: 60, label: 'Abrir\nObjeto', icon: <FolderBoxIcon /> }]} /></RibbonItems>
      <RibbonCaption>Abrir Objeto</RibbonCaption>
    </RibbonGroup>
    <RibbonGroup $w={70}>
      <RibbonItems><RibbonBtns items={[{ w: 60, label: 'Actualizar', icon: <RefreshIcon />, live: true }]} /></RibbonItems>
      <RibbonCaption>Vista</RibbonCaption>
    </RibbonGroup>
    <RibbonGroup $w={328}>
      <RibbonItems $start>
        <RibbonBtns items={[
          { w: 60, label: 'Convertir\na Pedido', icon: <BigDocCheck /> },
          { w: 77, label: 'Autogenerar\nPresupuestos', icon: <BigDocPen color="#6cc51a" />, live: true },
          { w: 68, label: 'Albaranado\nParcial', icon: <BigDocBox /> },
          { w: 60, label: 'Albaranar\nPedidos', icon: <BigDocBox /> },
          { w: 54, label: 'Facturar', icon: <BigDocPen color="#e8401c" />, live: true },
        ]} />
      </RibbonItems>
      <RibbonCaption>Procesos</RibbonCaption>
    </RibbonGroup>
    <RibbonGroup $w={84}>
      <RibbonItems><RibbonBtns items={[{ w: 78, label: 'Mostrar en\nel Informe', icon: <ClipboardIcon />, menu: true }]} /></RibbonItems>
      <RibbonCaption>View</RibbonCaption>
    </RibbonGroup>
    <RibbonGroup $w={174}>
      <RibbonItems>
        <RibbonBtns items={[{ w: 52, label: 'Objeto\nAnterior', icon: <RoundArrow /> }, { w: 58, label: 'Siguiente\nobjeto', icon: <RoundArrow down /> }]} />
        <RecordCount>0 de 872</RecordCount>
      </RibbonItems>
      <RibbonCaption>Navegación Registros</RibbonCaption>
    </RibbonGroup>
    <RibbonGroup $w={55}>
      <RibbonItems><RibbonBtns items={[{ w: 48, label: 'Cerrar', icon: <CloseBigIcon />, live: true }]} /></RibbonItems>
      <RibbonCaption>Cerrar</RibbonCaption>
    </RibbonGroup>
    <RibbonGroup $w={173}>
      <RibbonItems>
        <RibbonField $w={150}><Select aria-label="Filtros" /><FieldButton type="button" aria-label="Abrir filtros"><Caret /></FieldButton></RibbonField>
      </RibbonItems>
      <RibbonCaption>Filtros</RibbonCaption>
    </RibbonGroup>
    <RibbonGroup $w={173}>
      <RibbonItems>
        <RibbonField $w={150}><SearchBox aria-label="Texto a buscar" placeholder="Texto a buscar..." /><FieldButton type="button" $w={39}>Buscar</FieldButton></RibbonField>
      </RibbonItems>
      <RibbonCaption>Búsqueda de Texto Completa</RibbonCaption>
    </RibbonGroup>
  </Ribbon>
);

const Scrollbar = ({ thumb, corner = false }: { thumb: number; corner?: boolean }) => (
  <ScrollTrack>
    {corner && <CornerCell />}
    <ScrollArrow><Caret up color="#333" /></ScrollArrow>
    <ScrollThumb $h={thumb}><Ridges /></ScrollThumb>
    <ScrollSpace />
    <ScrollArrow><Caret color="#333" /></ScrollArrow>
  </ScrollTrack>
);

const Navigation = () => (
  <Side>
    <SideHead>
      <SideTitle>Navegación</SideTitle>
      <button type="button" aria-label="Fijar"><svg width="9" height="10" viewBox="0 0 9 10" fill="none"><path d="M2.500 1 H6.500 V5.500 M2.500 1 V5.500 M5.800 1 V5.500 M.5 5.700 H8.500 M4.500 6 V9.500" stroke="#333a48" /></svg></button>
      <button type="button" aria-label="Cerrar panel"><svg width="9" height="9" viewBox="0 0 9 9" fill="none"><path d="M1 1 L8 8 M8 1 L1 8" stroke="#333a48" strokeWidth="2" /></svg></button>
    </SideHead>
    <SideSection>Ventas</SideSection>
    <TreeBox>
      <Tree>
        {tree.map(([level, label, icon, open]) => (
          <TreeRow key={label} $level={level}>
            <TwistyCell>{open !== undefined && <Twisty open={open} />}</TwistyCell>
            {icon}
            <TreeLink href="#" $on={label === 'Facturación Automática'}>{label}</TreeLink>
          </TreeRow>
        ))}
      </Tree>
      <Scrollbar thumb={80} />
    </TreeBox>
    <SideLinks>
      <li><SideLink href="#"><HomeIcon />Inicio</SideLink></li>
      <li><SideLink href="#"><ReportIcon />Análisis e Informes</SideLink></li>
      <li><SideLink href="#"><ContactsIcon />Contactos</SideLink></li>
      <li><SideLink href="#"><CrmIcon />CRM</SideLink></li>
    </SideLinks>
    <SideTools>
      <SideTool type="button" $on aria-label="Ventas"><CoinsIcon /></SideTool>
      <SideTool type="button" aria-label="Compras"><CoinsIcon out /></SideTool>
      <SideTool type="button" aria-label="Almacén"><BoxIcon /></SideTool>
      <SideTool type="button" aria-label="Fabricación"><PrinterIcon /></SideTool>
      <SideTool type="button" aria-label="Servicios"><HandGearIcon /></SideTool>
      <SideTool type="button" aria-label="Más"><svg width="9" height="6" viewBox="0 0 9 6" fill="#fff"><path d="M1 .8 H8 L4.500 4.800 Z" stroke="#666" /></svg></SideTool>
    </SideTools>
  </Side>
);

const Grid = () => (
  <GridArea>
    <TableWrap>
      <Table>
        <colgroup>
          <Col $w={16} /><Col $w={21} /><Col $w={41} />
          {columns.slice(1).map((c, i) => <Col key={i} $w={c.w} />)}
        </colgroup>
        <thead>
          <tr>
            <HeadCell aria-label="Indicador" />
            {columns.map((c, i) => (
              <HeadCell key={i} colSpan={c.span} scope="col">
                {c.sort ? <HeadInner>{c.label}<Caret up={c.sort === 'up'} /></HeadInner> : c.label}
              </HeadCell>
            ))}
          </tr>
          <tr>
            <FilterCell>
              <Center><svg width="7" height="9" viewBox="0 0 7 9"><path d="M.5 2.500 A3 2.500 0 0 1 6.500 2.500 Q6.500 4.500 4.300 5 V9 H2.700 V5 Q.5 4.500 .5 2.500 Z" fill="#111" /><circle cx="3.500" cy="2.500" r=".9" fill="#fff" /></svg></Center>
            </FilterCell>
            {columns.map((c, i) => (
              <FilterCell key={i} colSpan={c.span}>
                {c.label === 'Facturado' && <Check type="checkbox" $mixed aria-label="Filtrar por facturado" />}
              </FilterCell>
            ))}
          </tr>
        </thead>
        <tbody>
          <tr>
            <Marker />
            <GroupCell colSpan={16}><GroupLabel><Twisty open={false} />Fecha Generación Automática: 01/06/2015 0:00 (Número=94)</GroupLabel></GroupCell>
          </tr>
          <tr>
            <Marker><Center><SideCaret /></Center></Marker>
            <GroupCell colSpan={16} $on><GroupLabel><Twisty open />Fecha Generación Automática: 01/04/2015 0:00 (Número=49)</GroupLabel></GroupCell>
          </tr>
          {rows.map(([num, name, base, iva, total, year, ctr]) => (
            <tr key={num}>
              <Marker />
              <IndentCell />
              <FirstCell>2015</FirstCell>
              <Cell>P</Cell>
              <Cell $align="right">{num}</Cell>
              <Cell>01/04/2015</Cell>
              <NameCell colSpan={2}>{name}</NameCell>
              <Cell $align="right">{base}</Cell>
              <Cell $align="right">{iva}</Cell>
              <Cell $align="right">{total}</Cell>
              <Cell $tone="#2f9e50">{total && 'Aceptado'}</Cell>
              <Cell>ALQUILER ABRIL...</Cell>
              <Cell>PEDIDO 2015...</Cell>
              <Cell><Check type="checkbox" defaultChecked aria-label={`Facturado ${num}`} /></Cell>
              <Cell>{year}</Cell>
              <Cell $align="right">{ctr}</Cell>
            </tr>
          ))}
        </tbody>
      </Table>
    </TableWrap>
    <Scrollbar thumb={29} corner />
  </GridArea>
);

const Documents = () => (
  <Main>
    <DocTabs>
      <DocTabList>
        {docTabs.map((t) => (
          <DocTab key={t.text} $w={t.w} $active={t.active}>
            {t.icon}
            <DocTabLabel type="button">{t.text}</DocTabLabel>
            {t.active
              ? <DocTabClose type="button" aria-label="Cerrar pestaña"><svg width="9" height="9" viewBox="0 0 9 9" fill="none"><path d="M1 1 L8 8 M8 1 L1 8" stroke="#555" strokeWidth="1.200" /></svg></DocTabClose>
              : <DocTabGutter />}
          </DocTab>
        ))}
      </DocTabList>
      <DocTabNav>
        <DocTabNavButton type="button" aria-label="Lista"><Caret color="#66728a" /></DocTabNavButton>
        <DocTabNavButton type="button" aria-label="Anterior"><SideCaret left color="#b9c2d0" /></DocTabNavButton>
        <DocTabNavButton type="button" aria-label="Siguiente"><SideCaret color="#7a8699" /></DocTabNavButton>
      </DocTabNav>
    </DocTabs>
    <Panel>
      <GroupBar><GroupChip type="button">Fecha Generación Automática<Caret /></GroupChip></GroupBar>
      <Grid />
      <GridFooter />
    </Panel>
  </Main>
);

const InvoiceDialog = () => {
  const date = useRef<HTMLInputElement>(null);
  useEffect(() => {
    date.current?.focus();
    date.current?.setSelectionRange(6, 10);
  }, []);
  return (
    <Dialog role="dialog" aria-labelledby="dlg-title">
      <DialogHead>
        <DocPenIcon />
        <DialogTitle id="dlg-title">Contratos en Vigor: Generación automática de PRE facturas</DialogTitle>
        <DialogCtl type="button" aria-label="Minimizar"><svg width="12" height="9" viewBox="0 0 12 9"><rect x="1" y="5" width="10" height="3" fill="#fff" stroke="#4a5a70" strokeWidth=".8" /></svg></DialogCtl>
        <DialogCtl type="button" aria-label="Maximizar"><svg width="12" height="9" viewBox="0 0 12 9"><rect x="1" y=".5" width="10" height="8" rx="1" fill="#fff" stroke="#4a5a70" strokeWidth=".8" /><rect x="4" y="3" width="4" height="3" fill="#8fb0d3" stroke="#4a5a70" strokeWidth=".8" /></svg></DialogCtl>
        <DialogCtl type="button" $danger aria-label="Cerrar"><svg width="12" height="9" viewBox="0 0 12 9" fill="none"><path d="M2 1 L10 8 M10 1 L2 8" stroke="#50303a" strokeWidth="3.600" /><path d="M2 1 L10 8 M10 1 L2 8" stroke="#fff" strokeWidth="2.200" /></svg></DialogCtl>
      </DialogHead>
      <DialogBody onSubmit={(e) => e.preventDefault()}>
        <GroupBox>
          <GroupTitle><DocPenIcon />Autogenerar PRE-facturas de Contratos</GroupTitle>
          <FirstFormRow>
            <FormLabel htmlFor="org">Organización</FormLabel>
            <Field $w={177} $tone="flat">
              <TextBox id="org" $wide readOnly defaultValue="Maquinarias Evo, S.A." />
              <FieldButton type="button" aria-label="Borrar"><svg width="8" height="8" viewBox="0 0 8 8" fill="none"><path d="M.5 .5 L7.500 7.500 M7.500 .5 L.5 7.500" stroke="#777" strokeWidth="1.300" /></svg></FieldButton>
              <FieldButton type="button" aria-label="Elegir"><Caret color="#808080" /></FieldButton>
            </Field>
          </FirstFormRow>
          <FormRow>
            <FormLabel htmlFor="date">Fecha Facturación</FormLabel>
            <Field $w={118} $tone="white">
              <TextBox id="date" ref={date} defaultValue="01/04/2015 0:00" />
              <FieldButton type="button" aria-label="Calendario"><Caret /></FieldButton>
            </Field>
          </FormRow>
        </GroupBox>
        <DialogFooter>
          <DialogButton $primary>OK</DialogButton>
          <DialogButton type="button">Cancel</DialogButton>
        </DialogFooter>
      </DialogBody>
      <ResizeCorner><Grip /></ResizeCorner>
    </Dialog>
  );
};

export default function App() {
  return (
    <Frame>
      <GlobalStyle />
      <Defs />
      <Shell>
        <TitleBar>
          <Quick>
            <AppIcon />
            <QuickRule />
            <QuickButton type="button" aria-label="Actualizar"><RefreshIcon size={17} /></QuickButton>
            <QuickButton type="button" aria-label="Anterior"><RoundArrow size={17} /></QuickButton>
            <QuickButton type="button" aria-label="Siguiente"><RoundArrow size={17} down /></QuickButton>
            <QuickMenu type="button" aria-label="Personalizar"><svg width="6" height="6" viewBox="0 0 6 6"><path d="M0 0 H6 V1 H0 Z M0 3 H6 L3 6 Z" fill="#222" /></svg></QuickMenu>
          </Quick>
          <WindowTitle>Fact.Auto. Contratos (Presupuestos) - Vortex Evolution</WindowTitle>
          <WinControls>
            <WinButton type="button" aria-label="Minimizar ventana"><svg width="10" height="10" viewBox="0 0 10 10"><path d="M0 5.500 H10" stroke="#888" /></svg></WinButton>
            <WinButton type="button" aria-label="Maximizar ventana"><svg width="10" height="10" viewBox="0 0 10 10" fill="none"><rect x=".5" y=".5" width="9" height="9" stroke="#888" /></svg></WinButton>
            <WinButton type="button" aria-label="Cerrar ventana"><svg width="10" height="10" viewBox="0 0 10 10"><path d="M0 0 L10 10 M10 0 L0 10" stroke="#888" /></svg></WinButton>
          </WinControls>
        </TitleBar>
        <TabStrip>
          <FileButton type="button" aria-label="Menú">
            <svg width="15" height="12" viewBox="0 0 15 12" fill="none"><rect x=".5" y=".5" width="14" height="11" fill="#2c66b8" stroke="#fff" /><rect x="7" y="1" width="7" height="10" fill="#fff" /><path d="M9 3.500 H13 M9 5.500 H13 M9 7.500 H13" stroke="#2c66b8" /></svg>
            <svg width="7" height="4" viewBox="0 0 7 4"><path d="M.5 .3 H6.500 L3.500 3.500 Z" fill="#fff" /></svg>
          </FileButton>
          <RibbonTab type="button" $active $w={47}>Inicio</RibbonTab>
          <RibbonTab type="button" $w={60}>Vista</RibbonTab>
          <RibbonTab type="button" $w={86}>Herramientas</RibbonTab>
          <RibbonTab type="button" $w={60}>View</RibbonTab>
          <CollapseButton type="button" aria-label="Contraer cinta"><svg width="9" height="7" viewBox="0 0 9 7" fill="none"><path d="M.5 4 L4.500 .7 L8.500 4 Q8.500 6 7 6 L4.500 4 L2 6 Q.5 6 .5 4 Z" stroke="#333" /></svg></CollapseButton>
        </TabStrip>
        <RibbonBar />
        <Body>
          <Navigation />
          <Documents />
        </Body>
        <StatusBar>
          <span>Usuario: rpacheco</span>
          <StatusOrg>Organización Activa:</StatusOrg>
          <StatusName>Maquinarias Evo, S.A.</StatusName>
          <StatusNotice><BellIcon />No hay elementos que mostrar</StatusNotice>
          <StatusGrip><Grip /></StatusGrip>
        </StatusBar>
      </Shell>
      <InvoiceDialog />
    </Frame>
  );
}
